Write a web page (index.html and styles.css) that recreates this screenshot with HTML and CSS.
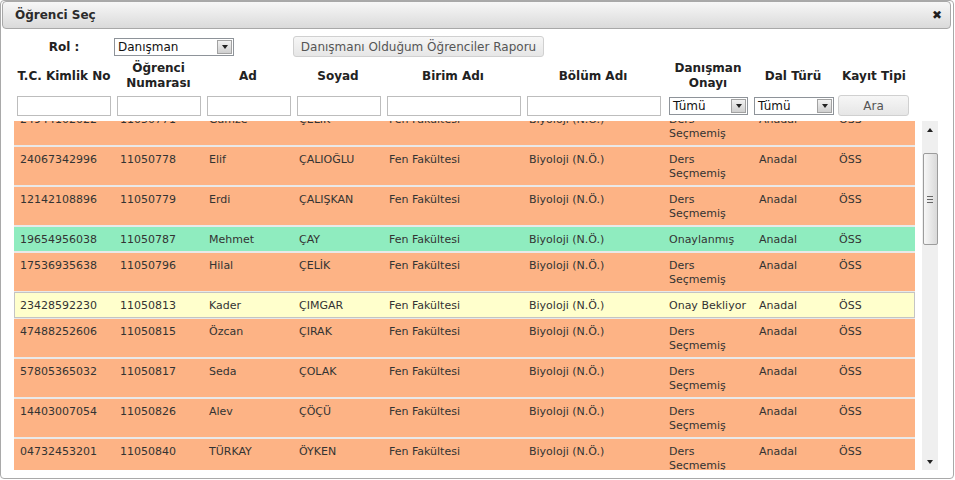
FILE: index.html
```html
<!DOCTYPE html>
<html lang="tr">
<head>
<meta charset="utf-8">
<title>Öğrenci Seç</title>
<link rel="stylesheet" href="styles.css">
</head>
<body>
<div class="dialog">
  <div class="titlebar">
    <span class="title">Öğrenci Seç</span>
    <span class="close">✖</span>
  </div>
  <div class="content">
    <div class="rolrow">
      <span class="rol-label">Rol :</span>
      <div class="select sel-rol"><span>Danışman</span><span class="arrow"><i></i></span></div>
      <button class="btn report">Danışmanı Olduğum Öğrenciler Raporu</button>
    </div>
    <div class="grid head">
      <div>T.C. Kimlik No</div>
      <div>Öğrenci<br>Numarası</div>
      <div>Ad</div>
      <div>Soyad</div>
      <div>Birim Adı</div>
      <div>Bölüm Adı</div>
      <div>Danışman<br>Onayı</div>
      <div>Dal Türü</div>
      <div>Kayıt Tipi</div>
    </div>
    <div class="grid filters">
      <div><input class="inp w94 ml3" type="text"></div>
      <div><input class="inp w84 ml3" type="text"></div>
      <div><input class="inp w84 ml4" type="text"></div>
      <div><input class="inp w84 ml4" type="text"></div>
      <div><input class="inp w134 ml4" type="text"></div>
      <div><input class="inp w134 ml4" type="text"></div>
      <div><div class="select sel-f1"><span>Tümü</span><span class="arrow"><i></i></span></div></div>
      <div><div class="select sel-f2"><span>Tümü</span><span class="arrow"><i></i></span></div></div>
      <div><button class="btn ara">Ara</button></div>
    </div>
    <div class="bodywrap">
      <div class="rowsview">
        <div class="rows">
          <div class="grid row orange"><div>24944102022</div><div>11050771</div><div>Gamze</div><div>ÇELİK</div><div>Fen Fakültesi</div><div>Biyoloji (N.Ö.)</div><div>Ders Seçmemiş</div><div>Anadal</div><div>ÖSS</div></div>
          <div class="grid row orange"><div>24067342996</div><div>11050778</div><div>Elif</div><div>ÇALIOĞLU</div><div>Fen Fakültesi</div><div>Biyoloji (N.Ö.)</div><div>Ders Seçmemiş</div><div>Anadal</div><div>ÖSS</div></div>
          <div class="grid row orange"><div>12142108896</div><div>11050779</div><div>Erdi</div><div>ÇALIŞKAN</div><div>Fen Fakültesi</div><div>Biyoloji (N.Ö.)</div><div>Ders Seçmemiş</div><div>Anadal</div><div>ÖSS</div></div>
          <div class="grid row green"><div>19654956038</div><div>11050787</div><div>Mehmet</div><div>ÇAY</div><div>Fen Fakültesi</div><div>Biyoloji (N.Ö.)</div><div>Onaylanmış</div><div>Anadal</div><div>ÖSS</div></div>
          <div class="grid row orange"><div>17536935638</div><div>11050796</div><div>Hilal</div><div>ÇELİK</div><div>Fen Fakültesi</div><div>Biyoloji (N.Ö.)</div><div>Ders Seçmemiş</div><div>Anadal</div><div>ÖSS</div></div>
          <div class="grid row yellow"><div>23428592230</div><div>11050813</div><div>Kader</div><div>ÇIMGAR</div><div>Fen Fakültesi</div><div>Biyoloji (N.Ö.)</div><div>Onay Bekliyor</div><div>Anadal</div><div>ÖSS</div></div>
          <div class="grid row orange"><div>47488252606</div><div>11050815</div><div>Özcan</div><div>ÇIRAK</div><div>Fen Fakültesi</div><div>Biyoloji (N.Ö.)</div><div>Ders Seçmemiş</div><div>Anadal</div><div>ÖSS</div></div>
          <div class="grid row orange"><div>57805365032</div><div>11050817</div><div>Seda</div><div>ÇOLAK</div><div>Fen Fakültesi</div><div>Biyoloji (N.Ö.)</div><div>Ders Seçmemiş</div><div>Anadal</div><div>ÖSS</div></div>
          <div class="grid row orange"><div>14403007054</div><div>11050826</div><div>Alev</div><div>ÇÖÇÜ</div><div>Fen Fakültesi</div><div>Biyoloji (N.Ö.)</div><div>Ders Seçmemiş</div><div>Anadal</div><div>ÖSS</div></div>
          <div class="grid row orange"><div>04732453201</div><div>11050840</div><div>TÜRKAY</div><div>ÖYKEN</div><div>Fen Fakültesi</div><div>Biyoloji (N.Ö.)</div><div>Ders Seçmemiş</div><div>Anadal</div><div>ÖSS</div></div>
        </div>
      </div>
      <div class="scrollbar">
        <div class="sb-btn"><i class="tri-up"></i></div>
        <div class="sb-gap"></div>
        <div class="sb-thumb"><i></i><i></i><i></i></div>
        <div class="sb-fill"></div>
        <div class="sb-btn"><i class="tri-down"></i></div>
      </div>
    </div>
  </div>
</div>
</body>
</html>
```
FILE: styles.css
```css
html, body {
  margin: 0;
  padding: 0;
  background: #fff;
}
body {
  font-family: "DejaVu Sans", Verdana, sans-serif;
  color: #333;
}
.dialog {
  box-sizing: border-box;
  width: 954px;
  height: 479px;
  border: 1px solid #a9a9a9;
  border-radius: 4px;
  padding: 0 2px 0 1px;
  overflow: hidden;
  background: #fff;
}
.titlebar {
  box-sizing: border-box;
  height: 28px;
  border: 1px solid #a8a8a8;
  border-radius: 4px;
  background: linear-gradient(#f7f7f7, #dadada);
  display: flex;
  align-items: center;
  justify-content: space-between;
  padding: 0 8px 0 12px;
}
.title {
  font-weight: bold;
  font-size: 12px;
  color: #2b2b2b;
}
.close {
  font-size: 12px;
  color: #1e1e1e;
}
.content {
  padding-left: 12px;
}
.rolrow {
  display: flex;
  align-items: center;
  height: 21px;
  margin-top: 7px;
}
.rol-label {
  width: 100px;
  text-align: center;
  font-weight: bold;
  font-size: 12px;
  color: #222;
}
.select {
  box-sizing: border-box;
  height: 18px;
  border: 1px solid #8e9399;
  background: #fff;
  display: flex;
  align-items: center;
  justify-content: space-between;
  font-size: 12px;
  color: #111;
  padding-left: 3px;
}
.arrow {
  box-sizing: border-box;
  width: 15px;
  height: 14px;
  margin-right: 1px;
  border: 1px solid #a2a2a2;
  background: linear-gradient(#f2f2f2, #cfcfcf);
  display: flex;
  align-items: center;
  justify-content: center;
}
.arrow i {
  width: 0;
  height: 0;
  border-left: 3px solid transparent;
  border-right: 3px solid transparent;
  border-top: 4px solid #222;
}
.sel-rol { width: 120px; }
.sel-f1 { width: 79px; margin-left: 6px; }
.sel-f2 { width: 80px; margin-left: 1px; }
.btn {
  box-sizing: border-box;
  font-family: "DejaVu Sans", Verdana, sans-serif;
  font-size: 12px;
  color: #555;
  background: linear-gradient(#f6f6f6, #e6e6e6);
  border: 1px solid #d0d0d0;
  border-radius: 3px;
  padding: 0;
}
.report {
  width: 251px;
  height: 21px;
  margin-left: 59px;
}
.ara {
  width: 71px;
  height: 21px;
  margin-left: 5px;
  display: block;
}
.grid {
  display: grid;
  grid-template-columns: 100px 89px 90px 90px 140px 140px 90px 80px 82px;
}
.head {
  margin-top: 4px;
  height: 30px;
  align-items: center;
  text-align: center;
  font-weight: bold;
  font-size: 12px;
  line-height: 15px;
  color: #222;
}
.filters {
  margin-top: 4px;
  height: 21px;
  align-items: center;
}
.inp {
  box-sizing: border-box;
  display: block;
  height: 20px;
  border: 1px solid #bdbdbd;
  background: #fff;
  padding: 0 2px;
  margin: 0;
  font-size: 11px;
}
.w94 { width: 94px; }
.w84 { width: 84px; }
.w134 { width: 134px; }
.ml3 { margin-left: 3px; }
.ml4 { margin-left: 4px; }
.bodywrap {
  display: flex;
  margin-top: 5px;
  height: 349px;
}
.rowsview {
  width: 901px;
  height: 349px;
  overflow: hidden;
}
.rows {
  margin-top: -16px;
  background: #e9e9e9;
}
.row {
  margin-top: 2px;
  font-size: 11px;
  line-height: 14px;
  color: #333;
}
.row > div {
  padding: 6px 4px 4px 6px;
}
.orange { background: #fdb385; }
.green { background: #8fecbf; }
.yellow {
  background: #ffffcc;
  margin-top: 1px;
  box-shadow: inset 0 0 0 1px #c4c4c4;
}
.yellow > div {
  padding-top: 7px;
  padding-bottom: 5px;
}
.yellow + .row { margin-top: 1px; }
.scrollbar {
  box-sizing: border-box;
  width: 16px;
  margin-left: 7px;
  height: 349px;
  background: #efefef;
  display: flex;
  flex-direction: column;
  align-items: center;
}
.sb-btn {
  height: 17px;
  width: 16px;
  display: flex;
  align-items: center;
  justify-content: center;
}
.tri-up, .tri-down {
  width: 0;
  height: 0;
  border-left: 3px solid transparent;
  border-right: 3px solid transparent;
}
.tri-up { border-bottom: 4px solid #222; }
.tri-down { border-top: 4px solid #222; }
.sb-gap { height: 15px; }
.sb-thumb {
  box-sizing: border-box;
  width: 15px;
  height: 92px;
  border: 1px solid #9c9c9c;
  border-radius: 2px;
  background: linear-gradient(to right, #f7f7f7, #d9d9d9);
  display: flex;
  flex-direction: column;
  align-items: center;
  justify-content: center;
  gap: 2px;
}
.sb-thumb i {
  display: block;
  width: 6px;
  height: 1px;
  background: #666;
}
.sb-fill { flex: 1; }
```
